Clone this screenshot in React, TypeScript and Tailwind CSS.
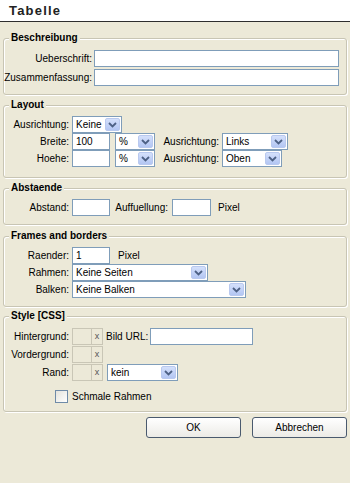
import type { ReactNode } from "react";

// XP-artiger Dialog "Tabelle"
const FONT = { fontFamily: '"Liberation Sans", Arial, sans-serif' };

function Chevron() {
  return (
    <span className="m-px flex h-[13px] w-[15px] shrink-0 items-center justify-center rounded-[2px] border border-[#B9C9EF] bg-gradient-to-b from-[#D4E0FB] to-[#B3C6F3]">
      <svg width="9" height="6" viewBox="0 0 9 6">
        <path d="M1 1 L4.5 4.5 L8 1" fill="none" stroke="#4D6185" strokeWidth="1.8" />
      </svg>
    </span>
  );
}

function Select({ value, w }: { value: string; w: string }) {
  return (
    <div className={`flex h-[17px] shrink-0 items-center border border-[#7F9DB9] bg-white ${w}`}>
      <span className="flex-1 truncate pl-[3px] leading-[15px]">{value}</span>
      <Chevron />
    </div>
  );
}

function Input({ value = "", w }: { value?: string; w: string }) {
  return (
    <input
      readOnly
      defaultValue={value}
      className={`h-[17px] shrink-0 border border-[#7F9DB9] bg-white px-[3px] leading-[15px] outline-none ${w}`}
    />
  );
}

function ColorBox() {
  return (
    <div className="flex h-[17px] shrink-0">
      <span className="h-[17px] w-[20px] border border-[#C9C6B6]" />
      <span className="flex h-[17px] w-[11px] items-center justify-center border border-l-0 border-[#C9C6B6] text-[9px] leading-none text-[#555]">
        x
      </span>
    </div>
  );
}

function Label({ children, w }: { children: ReactNode; w: string }) {
  return <span className={`shrink-0 text-right whitespace-nowrap ${w}`}>{children}</span>;
}

function Group({ title, className, children }: { title: string; className: string; children: ReactNode }) {
  return (
    <fieldset
      className={`mx-[3px] rounded-[3px] border border-[#C8C5B4] shadow-[inset_1px_1px_0_#fff,1px_1px_0_#fff] ${className}`}
    >
      <legend className="ml-[5px] bg-[#ECE9D8] px-[2px] text-[10px] font-bold leading-[14px] text-black">
        {title}
      </legend>
      {children}
    </fieldset>
  );
}

export default function App() {
  return (
    <div className="h-[483px] w-[350px] overflow-hidden bg-[#ECE9D8] text-[10px] text-black" style={FONT}>
      <div className="flex h-[22px] items-center border-b border-[#2E2E2E] bg-white pl-[9px] text-[13px] font-bold tracking-[1.2px] text-[#222]">
        Tabelle
      </div>

      <Group title="Beschreibung" className="mt-[9px] pb-[8px]">
        <div className="flex flex-col gap-[2px] pt-[5px]">
          <div className="flex h-[17px] items-center">
            <Label w="w-[88px]">Ueberschrift:</Label>
            <Input w="ml-[2px] w-[245px]" />
          </div>
          <div className="flex h-[17px] items-center">
            <Label w="w-[88px]">Zusammenfassung:</Label>
            <Input w="ml-[2px] w-[245px]" />
          </div>
        </div>
      </Group>

      <Group title="Layout" className="mt-[3px] pb-[10px]">
        <div className="flex flex-col pt-[4px]">
          <div className="flex h-[17px] items-center">
            <Label w="w-[65px]">Ausrichtung:</Label>
            <Select value="Keine" w="ml-[3px] w-[50px]" />
          </div>
          <div className="flex h-[17px] items-center">
            <Label w="w-[65px]">Breite:</Label>
            <Input value="100" w="ml-[3px] w-[38px]" />
            <Select value="%" w="ml-[5px] w-[40px]" />
            <Label w="w-[64px]">Ausrichtung:</Label>
            <Select value="Links" w="ml-[3px] w-[66px]" />
          </div>
          <div className="flex h-[17px] items-center">
            <Label w="w-[65px]">Hoehe:</Label>
            <Input w="ml-[3px] w-[38px]" />
            <Select value="%" w="ml-[5px] w-[40px]" />
            <Label w="w-[64px]">Ausrichtung:</Label>
            <Select value="Oben" w="ml-[3px] w-[60px]" />
          </div>
        </div>
      </Group>

      <Group title="Abstaende" className="mt-[3px] pb-[8px]">
        <div className="flex h-[17px] items-center mt-[4px]">
          <Label w="w-[65px]">Abstand:</Label>
          <Input w="ml-[3px] w-[38px]" />
          <Label w="w-[58px]">Auffuellung:</Label>
          <Input w="ml-[4px] w-[39px]" />
          <span className="ml-[7px]">Pixel</span>
        </div>
      </Group>

      <Group title="Frames and borders" className="mt-[4px] pb-[8px]">
        <div className="flex flex-col pt-[4px]">
          <div className="flex h-[17px] items-center">
            <Label w="w-[65px]">Raender:</Label>
            <Input value="1" w="ml-[3px] w-[38px]" />
            <span className="ml-[8px]">Pixel</span>
          </div>
          <div className="flex h-[17px] items-center">
            <Label w="w-[65px]">Rahmen:</Label>
            <Select value="Keine Seiten" w="ml-[3px] w-[136px]" />
          </div>
          <div className="flex h-[17px] items-center">
            <Label w="w-[65px]">Balken:</Label>
            <Select value="Keine Balken" w="ml-[3px] w-[174px]" />
          </div>
        </div>
      </Group>

      <Group title="Style [CSS]" className="mt-[2px] pb-[6px]">
        <div className="flex flex-col gap-[1px] pt-[5px]">
          <div className="flex h-[17px] items-center">
            <Label w="w-[65px]">Hintergrund:</Label>
            <div className="ml-[3px]">
              <ColorBox />
            </div>
            <span className="ml-[3px] whitespace-nowrap">Bild URL:</span>
            <Input w="ml-[2px] w-[103px]" />
          </div>
          <div className="flex h-[17px] items-center">
            <Label w="w-[65px]">Vordergrund:</Label>
            <div className="ml-[3px]">
              <ColorBox />
            </div>
          </div>
          <div className="flex h-[17px] items-center">
            <Label w="w-[65px]">Rand:</Label>
            <div className="ml-[3px]">
              <ColorBox />
            </div>
            <Select value="kein" w="ml-[4px] w-[71px]" />
          </div>
          <div className="mt-[6px] flex h-[17px] items-center">
            <span className="ml-[51px] h-[13px] w-[13px] border border-[#6F8BA8] bg-gradient-to-br from-[#E4E3DC] to-white" />
            <span className="ml-[4px]">Schmale Rahmen</span>
          </div>
        </div>
      </Group>

      <div className="mt-[5px] flex justify-end gap-[11px] pr-[3px]">
        <button className="h-[21px] w-[95px] rounded-[3px] border border-[#4A5A6E] bg-gradient-to-b from-white to-[#ECEBE6] text-[10px]">
          OK
        </button>
        <button className="h-[21px] w-[95px] rounded-[3px] border border-[#4A5A6E] bg-gradient-to-b from-white to-[#ECEBE6] text-[10px]">
          Abbrechen
        </button>
      </div>
    </div>
  );
}
